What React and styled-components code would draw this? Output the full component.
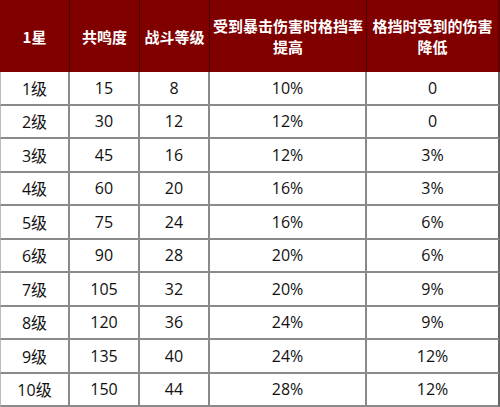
import React from "react";
import styled, { createGlobalStyle } from "styled-components";

const Global = createGlobalStyle`
  html, body { margin: 0; padding: 0; background: #fff; }
  body { font-family: "Open Sans", "Noto Sans CJK SC", "Noto Sans", sans-serif; }
`;

const Grid = styled.div`
  display: grid;
  width: 500px;
  height: 407px;
  grid-template-columns: 70px 70px 70px 157px 133px;
  grid-template-rows: 72px repeat(10, 1fr);
  box-sizing: border-box;
`;

const HeadCell = styled.div`
  background: #800000;
  color: #fff;
  font-family: "Noto Sans CJK SC", "Noto Sans", sans-serif;
  font-weight: 700;
  font-size: 15px;
  line-height: 21px;
  display: flex;
  align-items: center;
  justify-content: center;
  text-align: center;
  border-right: 1px solid #4a0000;
  padding: 0;
  box-sizing: border-box;
  &:nth-child(5) { border-right: 2px solid #600000; }
`;

const Cell = styled.div`
  display: flex;
  align-items: center;
  justify-content: center;
  font-size: 16px;
  color: #111;
  border-bottom: 2px solid #8a8a8a;
  border-right: 2px solid ${(p) => (p.$last ? "#666" : "#8a8a8a")};
  border-left: ${(p) => (p.$first ? "1px solid #bbb" : "none")};
  box-sizing: border-box;
`;

const headers = ["1星", "共鸣度", "战斗等级", "受到暴击伤害时格挡率提高", "格挡时受到的伤害降低"];
const rows = [
  ["1级", "15", "8", "10%", "0"],
  ["2级", "30", "12", "12%", "0"],
  ["3级", "45", "16", "12%", "3%"],
  ["4级", "60", "20", "16%", "3%"],
  ["5级", "75", "24", "16%", "6%"],
  ["6级", "90", "28", "20%", "6%"],
  ["7级", "105", "32", "20%", "9%"],
  ["8级", "120", "36", "24%", "9%"],
  ["9级", "135", "40", "24%", "12%"],
  ["10级", "150", "44", "28%", "12%"],
];

export default function App() {
  return (
    <>
      <Global />
      <Grid>
        {headers.map((h) => (
          <HeadCell key={h}>{h}</HeadCell>
        ))}
        {rows.map((r, i) =>
          r.map((c, j) => (
            <Cell key={i + "-" + j} $first={j === 0} $last={j === 4}>
              {c}
            </Cell>
          ))
        )}
      </Grid>
    </>
  );
}
